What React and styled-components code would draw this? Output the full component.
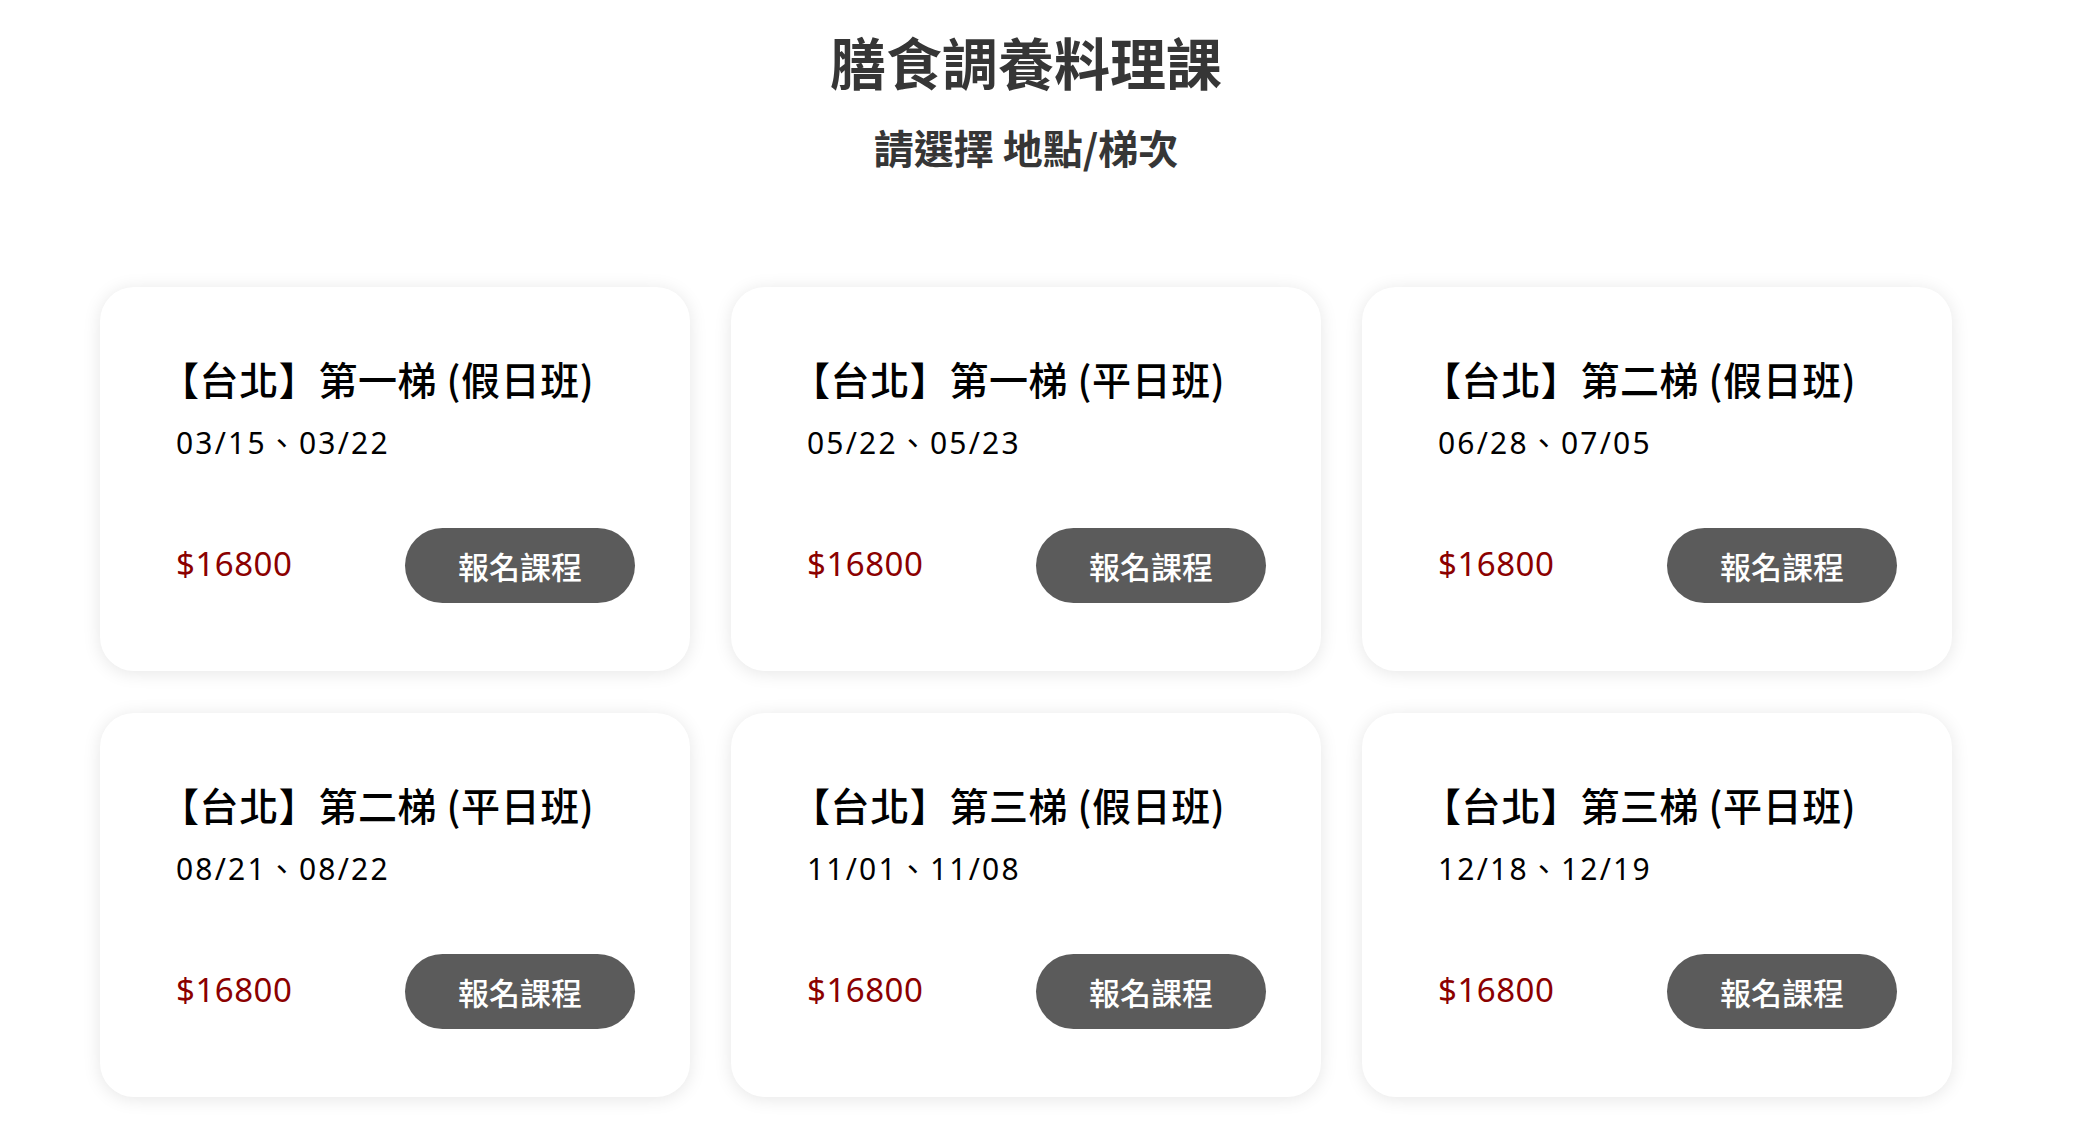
import React from 'react';
import styled, { createGlobalStyle } from 'styled-components';

const SESSIONS = [
  { id: 1, title: '【台北】第一梯 (假日班)', dates: '03/15、03/22', price: 16800 },
  { id: 2, title: '【台北】第一梯 (平日班)', dates: '05/22、05/23', price: 16800 },
  { id: 3, title: '【台北】第二梯 (假日班)', dates: '06/28、07/05', price: 16800 },
  { id: 4, title: '【台北】第二梯 (平日班)', dates: '08/21、08/22', price: 16800 },
  { id: 5, title: '【台北】第三梯 (假日班)', dates: '11/01、11/08', price: 16800 },
  { id: 6, title: '【台北】第三梯 (平日班)', dates: '12/18、12/19', price: 16800 },
];

const GlobalStyle = createGlobalStyle`
  html, body {
    margin: 0;
    padding: 0;
    background: #fff;
  }
  body {
    font-family: "Noto Sans", "Noto Sans CJK TC", sans-serif;
    overflow: hidden;
  }
`;

const Page = styled.div`
  padding: 28px 0 32px 100px;
`;

const Container = styled.div`
  width: 1852px;
`;

const Header = styled.header`
  display: flex;
  flex-direction: column;
  align-items: center;
  margin-bottom: 116px;
`;

const Heading = styled.h1`
  margin: 0;
  font-family: "Noto Sans CJK TC", sans-serif;
  font-size: 56px;
  line-height: 66px;
  font-weight: 700;
  color: #363636;
`;

const SubHeading = styled.h2`
  margin: 29px 0 0;
  font-family: "Noto Sans CJK TC", sans-serif;
  font-size: 40px;
  line-height: 48px;
  font-weight: 700;
  color: #363636;
`;

const Grid = styled.div`
  display: grid;
  grid-template-columns: repeat(3, 1fr);
  column-gap: 41px;
  row-gap: 42px;
`;

const Card = styled.div`
  background: #fff;
  border-radius: 34px;
  box-shadow: 0 2px 18px rgba(0, 0, 0, 0.1);
  padding: 68px 55px 68px 76px;
  display: flex;
  flex-direction: column;
`;

const CardTitle = styled.h3`
  margin: 0 0 0 -16px;
  font-family: "Noto Sans CJK TC", sans-serif;
  font-size: 39px;
  line-height: 46px;
  letter-spacing: 0.6px;
  font-weight: 500;
  color: #000;
`;

const Dates = styled.p`
  margin: 23px 0 0;
  font-family: "Noto Sans", "Noto Sans CJK TC", sans-serif;
  font-size: 30px;
  line-height: 38px;
  letter-spacing: 2.2px;
  color: #000;
`;

const Footer = styled.div`
  margin-top: 66px;
  display: flex;
  align-items: center;
  justify-content: space-between;
`;

const Price = styled.span`
  font-family: "Noto Sans", sans-serif;
  font-size: 33px;
  line-height: 40px;
  margin-top: -3px;
  color: #8b0000;
  letter-spacing: 0.5px;
`;

const EnrollButton = styled.button`
  width: 230px;
  height: 75px;
  border: none;
  border-radius: 38px;
  background: #5b5b5b;
  color: #fff;
  font-family: "Noto Sans CJK TC", sans-serif;
  font-size: 31px;
  font-weight: 500;
  cursor: pointer;
`;

const SessionCard = ({ session }) => (
  <Card>
    <CardTitle>{session.title}</CardTitle>
    <Dates>{session.dates}</Dates>
    <Footer>
      <Price>${session.price}</Price>
      <EnrollButton>報名課程</EnrollButton>
    </Footer>
  </Card>
);

export default function App() {
  return (
    <Page>
      <GlobalStyle />
      <Container>
        <Header>
          <Heading>膳食調養料理課</Heading>
          <SubHeading>請選擇 地點/梯次</SubHeading>
        </Header>
        <Grid>
          {SESSIONS.map(s => (
            <SessionCard key={s.id} session={s} />
          ))}
        </Grid>
      </Container>
    </Page>
  );
}
